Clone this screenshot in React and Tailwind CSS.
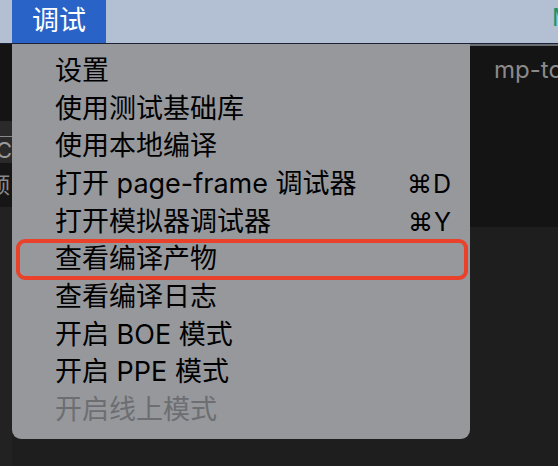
const font = { fontFamily: 'Inter, "Noto Sans CJK SC", sans-serif' };

const items = [
  { label: "设置" },
  { label: "使用测试基础库" },
  { label: "使用本地编译" },
  { label: "打开 page-frame 调试器", key: "⌘D" },
  { label: "打开模拟器调试器", key: "⌘Y" },
  { label: "查看编译产物", marked: true },
  { label: "查看编译日志" },
  { label: "开启 BOE 模式" },
  { label: "开启 PPE 模式" },
  { label: "开启线上模式", disabled: true },
];

function MenuItem({ item }) {
  return (
    <div className="relative flex h-[37.7px] items-center justify-between pl-[43px] pr-[18px]">
      {item.marked ? (
        <div className="absolute -top-[1px] bottom-[-2px] left-[4px] right-[2px] rounded-[9px] border-4 border-[#ea412a]" />
      ) : null}
      <span className={`whitespace-nowrap text-[27px] leading-[32px] ${item.disabled ? "text-[#6c6e72]" : "text-black"}`}>
        {item.label}
      </span>
      {item.key ? <span className="text-[25px] leading-[32px] tracking-[1px] text-black">{item.key}</span> : null}
    </div>
  );
}

export default function App() {
  return (
    <div className="flex h-[466px] w-[558px] flex-col overflow-hidden bg-[#1e1e1e]" style={font}>
      <div className="flex h-[44px] shrink-0 items-stretch border-b border-[#1b2236] bg-[#b3bfd3]">
        <div className="ml-[12px] flex w-[94px] items-center justify-center bg-[#2a63c8] text-[27px] text-white">
          调试
        </div>
        <div className="flex-1" />
        <div className="w-[6px] overflow-hidden pt-[4px] text-[24px] leading-[28px] text-[#17956c]">M</div>
      </div>
      <div className="flex flex-1">
        <div className="flex w-[12px] shrink-0 flex-col overflow-hidden">
          <div className="h-[77px] bg-[#141414]" />
          <div className="h-[16px] border-b border-[#8a8a8a] bg-[#2a2a2a]" />
          <div className="flex h-[26px] items-center bg-[#2a2a2a] text-[22px] text-[#9a9a9a]">
            <span className="-ml-[4px]">C</span>
          </div>
          <div className="flex h-[44px] items-center bg-[#161616] text-[22px] text-[#8a8a8a]">
            <span className="-ml-[12px]">预</span>
          </div>
          <div className="flex-1 bg-[#222222]" />
        </div>
        <div className="flex w-[458px] shrink-0 flex-col self-start">
          <div className="rounded-b-[9px] bg-[#96989c] pb-[10px] pt-[8px]">
            {items.map((item) => (
              <MenuItem key={item.label} item={item} />
            ))}
          </div>
        </div>
        <div className="flex flex-1 flex-col">
          <div className="h-[2px] bg-[#6a6d72]" />
          <div className="h-[181px] whitespace-nowrap bg-[#141414] pl-[24px] pt-[6px] text-[24px] text-[#8a8a8a]">
            mp-tools
          </div>
          <div className="flex-1 bg-[#1e1e1e]" />
        </div>
      </div>
    </div>
  );
}
